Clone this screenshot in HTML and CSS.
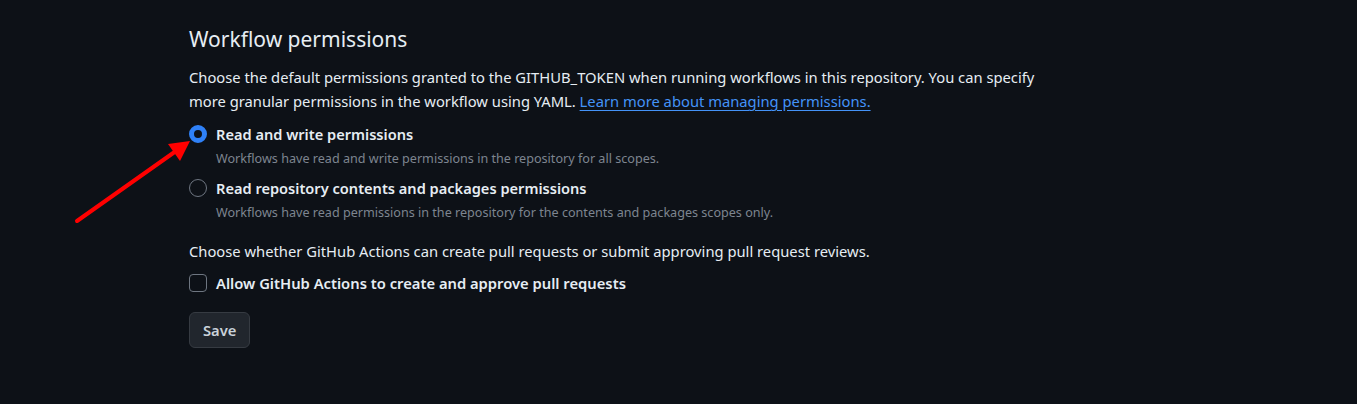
FILE: index.html
```html
<!DOCTYPE html>
<html lang="en">
<head>
  <meta charset="UTF-8">
  <meta name="viewport" content="width=device-width, initial-scale=1.0">
  <title>Actions settings</title>
  <link rel="stylesheet" href="styles.css">
</head>
<body>
  <main class="settings">
    <h2 class="subhead">Workflow permissions</h2>
    <p class="note">
      Choose the default permissions granted to the GITHUB_TOKEN when running workflows in this repository. You can specify
      more granular permissions in the workflow using YAML. <a href="#">Learn more about managing permissions.</a>
    </p>

    <div class="option option-first">
      <label class="option-label">
        <span class="radio checked"></span>
        Read and write permissions
      </label>
      <p class="option-desc">Workflows have read and write permissions in the repository for all scopes.</p>
    </div>

    <div class="option">
      <label class="option-label">
        <span class="radio"></span>
        Read repository contents and packages permissions
      </label>
      <p class="option-desc">Workflows have read permissions in the repository for the contents and packages scopes only.</p>
    </div>

    <p class="note note-second">Choose whether GitHub Actions can create pull requests or submit approving pull request reviews.</p>

    <label class="option-label check-row">
      <span class="checkbox"></span>
      Allow GitHub Actions to create and approve pull requests
    </label>

    <button class="btn">Save</button>
  </main>

  <!-- red annotation arrow pointing at the selected radio -->
  <svg class="annotation" width="140" height="100" viewBox="60 130 140 100">
    <line x1="77" y1="221" x2="176" y2="151" stroke="#f00" stroke-width="4" stroke-linecap="round"/>
    <polygon points="190,141 168,144 180,161" fill="#f00"/>
  </svg>
</body>
</html>
```

FILE: styles.css
```css
body {
  margin: 0;
  background-color: #0d1117;
  color: #e6edf3;
  font-family: "Noto Sans", "Liberation Sans", sans-serif;
  height: 100vh;
  overflow: hidden;
}

.settings {
  padding: 24px 0 0 189px;
  width: 870px;
}

.subhead {
  margin: 0;
  font-size: 21px;
  font-weight: 400;
  line-height: 30px;
}

.note {
  margin: 11px 0 0;
  font-size: 14.75px;
  line-height: 24px;
}

.note a {
  color: #4493f8;
  text-decoration: underline;
  text-underline-offset: 3px;
}

.note-second {
  margin-top: 14px;
}

.option-first {
  margin-top: 9px;
}

.option + .option {
  margin-top: 5px;
}

.option-label {
  display: flex;
  align-items: center;
  gap: 9px;
  font-size: 14.6px;
  font-weight: 600;
  line-height: 24px;
}

.option-desc {
  margin: 1px 0 0 27px;
  font-size: 12.6px;
  line-height: 24px;
  color: #7d8590;
}

.radio {
  width: 18px;
  height: 18px;
  box-sizing: border-box;
  border: 1px solid #6e7681;
  border-radius: 50%;
}

.radio.checked {
  border: 5px solid #2f81f7;
}

.check-row {
  margin-top: 8px;
  font-size: 14.75px;
}

.checkbox {
  width: 18px;
  height: 18px;
  box-sizing: border-box;
  border: 1px solid #6e7681;
  border-radius: 4px;
}

.btn {
  display: block;
  margin-top: 17px;
  height: 36px;
  padding: 0 13px;
  background-color: #21262d;
  color: #c9d1d9;
  border: 1px solid #363b42;
  border-radius: 6px;
  font-family: inherit;
  font-size: 14.75px;
  font-weight: 600;
}

.annotation {
  position: absolute;
  left: 60px;
  top: 130px;
}
```
